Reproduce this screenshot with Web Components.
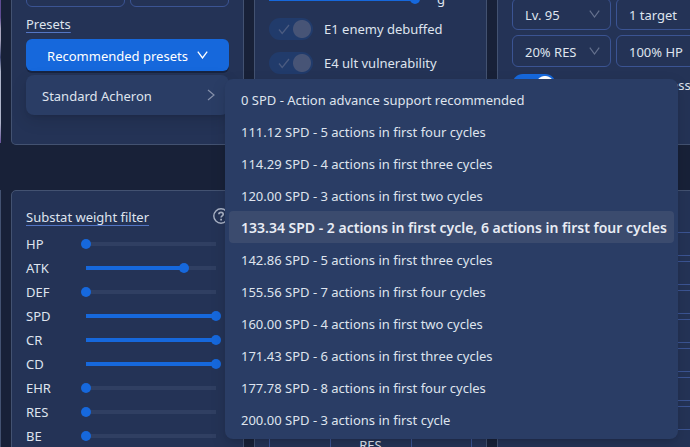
<!DOCTYPE html>
<html lang="en">
<head>
<meta charset="utf-8">
<title>Build options</title>
<style>
  html { overflow: hidden; }
  body {
    margin: 0;
    background: #182138;
    color: #dfe4ee;
    font: 13px/22px "Noto Sans", sans-serif;
    --card: #243356;
    --edge: #435271;
    --line: #3b5493;
    --blue: #1668dc;
    --rail: #303f62;
    --menu: #2a3d65;
  }
</style>
</head>
<body>
<option-board></option-board>
<script>
const define = (name, html, setup) => {
  const template = document.createElement('template');
  template.innerHTML = html;
  customElements.define(name, class extends HTMLElement {
    constructor() {
      super();
      this.attachShadow({ mode: 'open' }).append(template.content.cloneNode(true));
    }
    connectedCallback() { if (setup) setup(this, this.shadowRoot); }
  });
};

define('option-card', `
<style>
  :host { display: flex; flex-direction: column; box-sizing: border-box; min-width: 0;
    padding: 14px; background: var(--card); border: 1px solid var(--edge); border-radius: 5px; }
  :host([continued]) { border-top: 0; border-radius: 0 0 5px 5px; padding-top: 0; }
</style>
<slot></slot>`);

define('section-title', `
<style>
  :host { display: flex; justify-content: space-between; align-items: center; height: 24px; }
  h2 { margin: 0; font: inherit; text-decoration: underline; text-decoration-color: #5476c4;
    text-decoration-thickness: 1px; text-underline-offset: 3px; text-decoration-skip-ink: none; }
</style>
<h2><slot></slot></h2><slot name="action"></slot>`);

define('help-button', `
<style>
  :host { display: block; height: 18px; }
  button { display: block; padding: 0; border: 0; background: none; color: #a9b2c5; }
  svg { display: block; }
</style>
<button aria-label="Help"><svg width="16" height="16" viewBox="0 0 16 16" fill="none" stroke="currentColor">
  <circle cx="8" cy="8" r="7.2" stroke-width="1.4"/>
  <path d="M5.9 6.3C5.9 3.6 10.2 3.7 10.2 6.2C10.2 7.8 8.1 7.8 8.1 9.5" stroke-width="1.7"/>
  <path d="M8.1 10.8v1.7" stroke-width="1.8"/>
</svg></button>`);

define('choice-field', `
<style>
  :host { display: block; position: relative; min-width: 0; }
  select { appearance: none; box-sizing: border-box; display: block; width: 100%; height: 32px;
    margin: 0; padding: 2px 24px 0 12px; font: inherit; color: inherit; background: none;
    border: 1px solid var(--line); border-radius: 6px; }
  svg { position: absolute; right: 11px; top: 12px; pointer-events: none; }
</style>
<select></select>
<svg width="11" height="8" viewBox="0 0 11 8" fill="none" stroke="#65718e" stroke-width="1.2"><path d="M.8.7 5.5 7 10.2.7"/></svg>`,
(host, root) => {
  const select = root.querySelector('select');
  select.setAttribute('aria-label', host.getAttribute('label'));
  select.replaceChildren(new Option(host.getAttribute('value') || ''));
});

define('switch-row', `
<style>
  :host { display: block; }
  label { display: flex; align-items: center; gap: 11px; height: 22px; white-space: nowrap; }
  :host([spread]) label { justify-content: space-between; padding-right: 27px; }
  span { position: relative; display: block; flex: none; width: 44px; height: 22px; }
  input { appearance: none; display: block; width: 44px; height: 22px; margin: 0; border-radius: 11px;
    background: radial-gradient(circle at 33px 11px, #fff 8.5px, transparent 9.5px) var(--blue); }
  input:disabled { background: radial-gradient(circle at 33px 11px, #475476 8.5px, transparent 9.5px) #213b6b; }
  svg { position: absolute; left: 9px; top: 6px; }
</style>
<label><span><input type="checkbox" role="switch" checked>
<svg width="12" height="11" viewBox="0 0 12 11" fill="none" stroke="#4b5b80" stroke-width="1.3"><path d="M1 5.5 4.2 9.4 11 1"/></svg></span><slot></slot></label>`,
(host, root) => { root.querySelector('input').disabled = host.hasAttribute('disabled'); });

define('stat-slider', `
<style>
  :host { display: block; }
  label { display: grid; grid-template-columns: 60px 1fr; align-items: center; height: 24px; padding-right: 13px; }
  :host([trailing]) label { grid-template-columns: 1fr 35px; gap: 22px; padding: 0; }
  :host([trailing]) span { order: 1; }
  input { appearance: none; display: block; width: calc(100% + 10px); height: 10px; margin: 0 -5px; background: none; }
  input::-webkit-slider-runnable-track { height: 10px;
    background: linear-gradient(to right, var(--blue) var(--fill), var(--rail) var(--fill)) center / calc(100% - 10px) 4px no-repeat; }
  input::-webkit-slider-thumb { appearance: none; width: 10px; height: 10px; border-radius: 50%; background: var(--blue); }
</style>
<label><span></span><input type="range" min="0" max="100"></label>`,
(host, root) => {
  const input = root.querySelector('input');
  root.querySelector('span').textContent = host.getAttribute('label');
  const paint = () => input.style.setProperty('--fill', input.value + '%');
  input.value = host.getAttribute('value');
  input.oninput = paint;
  paint();
});

define('menu-item', `
<style>
  :host { display: block; }
  button { display: flex; align-items: center; justify-content: space-between; width: 100%; height: 32px;
    padding: 0 12px; border: 0; border-radius: 4px; background: none; font: inherit; color: inherit;
    text-align: left; white-space: nowrap; }
  span { padding-top: 2px; }
  :host([selected]) button { background: #3b4b6e; font-size: 14px; font-weight: 600; color: #e8ecf4; }
  svg { display: none; }
  :host([parent]) button { padding-right: 10px; }
  :host([parent]) svg { display: block; }
</style>
<button role="menuitem"><span><slot></slot></span>
<svg width="8" height="12" viewBox="0 0 8 12" fill="none" stroke="#8590aa" stroke-width="1.2"><path d="M1 1 7 6 1 11"/></svg></button>`);

define('preset-menu', `
<style>
  :host { display: block; position: relative; }
  .trigger { display: flex; align-items: center; justify-content: center; gap: 9px; width: 100%; height: 32px;
    padding: 0; border: 0; border-radius: 6px; background: var(--blue); color: #fff; font: inherit;
    box-shadow: 0 2px 0 #172442; white-space: nowrap; }
  .trigger span { padding-top: 2px; }
  .panel { position: absolute; z-index: 2; box-sizing: border-box; padding: 4px; border-radius: 8px;
    background: var(--menu); box-shadow: 0 6px 16px rgb(0 0 0 / 12%), 0 3px 6px -4px rgb(0 0 0 / 20%); }
  .presets { top: 36px; left: 0; width: 100%; }
  .speeds { top: 4px; left: calc(100% - 4px); width: 453px; }
</style>
<button class="trigger"><span>Recommended presets</span>
<svg width="11" height="8" viewBox="0 0 11 8" fill="none" stroke="currentColor" stroke-width="1.3"><path d="M.8.7 5.5 7 10.2.7"/></svg></button>
<div class="panel presets" role="menu">
  <menu-item parent>Standard Acheron</menu-item>
  <div class="panel speeds" role="menu"><slot></slot></div>
</div>`);

define('option-board', `
<style>
  :host { display: grid; grid-template-columns: 1px repeat(3, minmax(233px, 1fr));
    grid-template-rows: minmax(145px, auto) auto; gap: 45px 10px; }
  .art { height: 143px; background: linear-gradient(#5e4b91 0 12%, #a8a5bd 20% 28%, #37406d 40%, #aeb4c9 50% 86%, #67539a); }
  .edge { background: var(--edge); }
  .pair { display: grid; grid-template-columns: 1fr 1fr; gap: 5px; }
  .cut { height: 7px; overflow: hidden; align-content: end; }
  .first { margin-top: -2px; }
  .gap { margin-top: 7px; }
  .presets-title { margin: 5px 0 3px; }
  .cut-slider { margin-top: -13px; }
  .switches { display: grid; gap: 12px; margin-top: 7px; }
  .sliders { margin-top: 3px; }
  .inputs { display: grid; gap: 5px; margin-top: 27px; }
  input { box-sizing: border-box; width: 100%; height: 24px; padding: 0 8px; border: 1px solid var(--line);
    border-radius: 4px; background: none; color: inherit; font: inherit; }
  table { width: 100%; height: 260px; border-collapse: collapse; table-layout: fixed; }
  td { padding: 0 0 8px; border: 1px solid var(--line); text-align: center; vertical-align: bottom; }
  td:nth-child(2) { width: 80px; }
</style>
<div class="art"></div>
<option-card continued>
  <div class="pair cut"><choice-field label="Rank"></choice-field><choice-field label="Priority"></choice-field></div>
  <section-title class="presets-title">Presets</section-title>
  <preset-menu>
    <menu-item>0 SPD - Action advance support recommended</menu-item>
    <menu-item>111.12 SPD - 5 actions in first four cycles</menu-item>
    <menu-item>114.29 SPD - 4 actions in first three cycles</menu-item>
    <menu-item>120.00 SPD - 3 actions in first two cycles</menu-item>
    <menu-item selected>133.34 SPD - 2 actions in first cycle, 6 actions in first four cycles</menu-item>
    <menu-item>142.86 SPD - 5 actions in first three cycles</menu-item>
    <menu-item>155.56 SPD - 7 actions in first four cycles</menu-item>
    <menu-item>160.00 SPD - 4 actions in first two cycles</menu-item>
    <menu-item>171.43 SPD - 6 actions in first three cycles</menu-item>
    <menu-item>177.78 SPD - 8 actions in first four cycles</menu-item>
    <menu-item>200.00 SPD - 3 actions in first cycle</menu-item>
  </preset-menu>
</option-card>
<option-card continued>
  <stat-slider class="cut-slider" trailing label="g" value="100"></stat-slider>
  <div class="switches">
    <switch-row disabled>E1 enemy debuffed</switch-row>
    <switch-row disabled>E4 ult vulnerability</switch-row>
  </div>
</option-card>
<option-card continued>
  <div class="pair first">
    <choice-field label="Enemy level" value="Lv. 95"></choice-field>
    <choice-field label="Targets" value="1 target"></choice-field>
    <choice-field label="Resistance" value="20% RES"></choice-field>
    <choice-field label="Enemy HP" value="100% HP"></choice-field>
  </div>
  <switch-row class="gap" spread>Elemental weakness</switch-row>
</option-card>

<div class="edge"></div>
<option-card>
  <section-title>Substat weight filter<help-button slot="action"></help-button></section-title>
  <div class="sliders">
    <stat-slider label="HP" value="0"></stat-slider>
    <stat-slider label="ATK" value="75"></stat-slider>
    <stat-slider label="DEF" value="0"></stat-slider>
    <stat-slider label="SPD" value="100"></stat-slider>
    <stat-slider label="CR" value="100"></stat-slider>
    <stat-slider label="CD" value="100"></stat-slider>
    <stat-slider label="EHR" value="0"></stat-slider>
    <stat-slider label="RES" value="0"></stat-slider>
    <stat-slider label="BE" value="0"></stat-slider>
  </div>
</option-card>
<option-card>
  <table><tr><td></td><td>RES</td><td></td></tr></table>
</option-card>
<option-card>
  <div class="inputs">
    <input aria-label="Stat 1"><input aria-label="Stat 2"><input aria-label="Stat 3"><input aria-label="Stat 4">
    <input aria-label="Stat 5"><input aria-label="Stat 6"><input aria-label="Stat 7">
  </div>
</option-card>`);
</script>
</body>
</html>
